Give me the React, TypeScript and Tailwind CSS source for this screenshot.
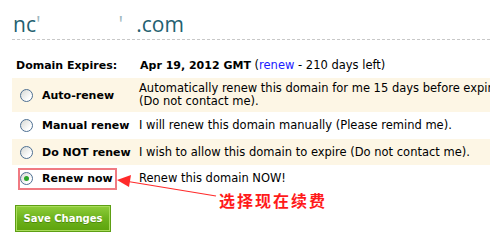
import React from "react";

function Radio({ checked }: { checked?: boolean }) {
  return (
    <span className="relative inline-flex h-[13px] w-[13px] shrink-0 items-center justify-center rounded-full border border-[#4d6f92] bg-[linear-gradient(135deg,#d6d8d4_0%,#ffffff_75%)]">
      {checked && <span className="h-[5px] w-[5px] rounded-full bg-[#2aa52a]" />}
    </span>
  );
}

const rows = [
  {
    label: "Auto-renew",
    desc: (
      <>
        Automatically renew this domain for me 15 days before expiring.
        <br />
        (Do not contact me).
      </>
    ),
    bg: "bg-[#fdf6e5]",
    h: "h-[34px]",
  },
  {
    label: "Manual renew",
    desc: <>I will renew this domain manually (Please remind me).</>,
    bg: "bg-white",
    h: "h-[27px]",
  },
  {
    label: "Do NOT renew",
    desc: <>I wish to allow this domain to expire (Do not contact me).</>,
    bg: "bg-[#fdf6e5]",
    h: "h-[26px]",
  },
  {
    label: "Renew now",
    desc: <>Renew this domain NOW!</>,
    bg: "bg-white",
    h: "h-[27px]",
    checked: true,
  },
];

export default function App() {
  return (
    <div className="relative h-[241px] w-[490px] overflow-hidden bg-white font-['DejaVu_Sans',Verdana,sans-serif] text-[11px] leading-[13px] text-black">
      <div className="pl-[12px] pt-[12px]">
        <div className="h-[28px] border-b border-dashed border-[#c8c8c8] pl-[1px] font-['Open_Sans',sans-serif] text-[21px] leading-[24px] text-[#245f70]">
          nc<span className="text-[#9fb8c0]">'</span>
          <span className="inline-block w-[78px]" />
          <span className="text-[#9fb8c0]">'</span>
          <span className="inline-block w-[13px]" />
          .com
        </div>
        <div className="flex h-[38px] items-center pl-[4px] pt-[12px]">
          <span className="w-[124px] font-bold">Domain Expires:</span>
          <span className="text-[11.5px]">
            <b className="text-[11px]">Apr 19, 2012 GMT</b> (<span className="text-[#1a1aff]">renew</span> - 210 days left)
          </span>
        </div>
        <div className="w-[560px]">
          {rows.map((r) => (
            <div key={r.label} className={`flex items-center ${r.bg} ${r.h}`}>
              <div className="flex w-[127px] shrink-0 items-center pl-[8px]">
                <Radio checked={r.checked} />
                <span className="ml-[9px] whitespace-nowrap font-bold">{r.label}</span>
              </div>
              <div className="whitespace-nowrap text-[11.5px]">{r.desc}</div>
            </div>
          ))}
        </div>
        <div className="mt-[13px] pl-[3px]">
          <button className="h-[27px] w-[96px] border border-[#5d9f14] bg-[linear-gradient(#8fcd3a,#6db31d_50%,#5ea30c)] font-['DejaVu_Sans',Verdana,sans-serif] text-[10px] font-bold text-white shadow-[inset_0_0_0_1px_#a9dc5c] [text-shadow:0_1px_0_#4e8a0a]">
            Save Changes
          </button>
        </div>
      </div>

      {/* annotation box */}
      <div className="absolute left-[18px] top-[168px] h-[22px] w-[99px] border-2 border-[#f07a82]" />
      {/* arrow */}
      <svg className="absolute left-0 top-0" width="490" height="241">
        <line x1="128" y1="181.5" x2="216" y2="196" stroke="#ff2a2a" strokeWidth="1.2" />
        <polygon points="117,180 131,175 129,187" fill="#ff2a2a" />
      </svg>
      <div className="absolute left-[219px] top-[191px] font-['Noto_Sans_CJK_SC',serif] text-[16px] font-bold leading-[18px] tracking-[2px] text-[#ff1a1a]">
        选择现在续费
      </div>
    </div>
  );
}
